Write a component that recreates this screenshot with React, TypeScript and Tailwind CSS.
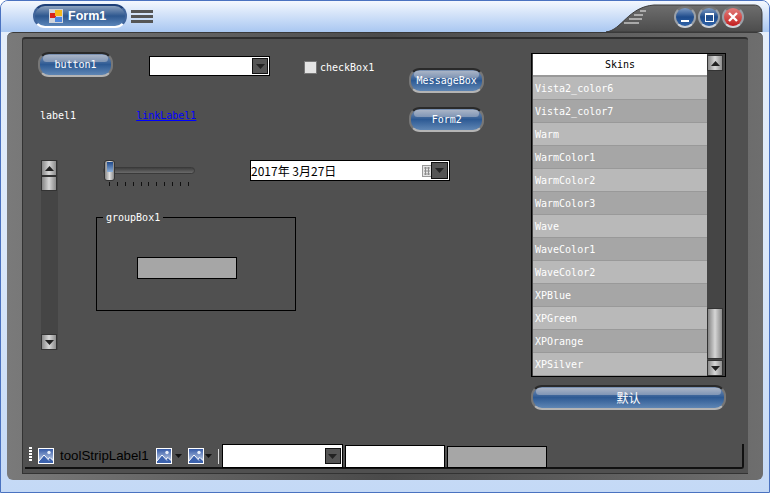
import React from 'react';

const mono = "font-['DejaVu_Sans_Mono',monospace] text-[10px] leading-none";

const SKINS = [
  'Vista2_color6', 'Vista2_color7', 'Warm', 'WarmColor1', 'WarmColor2', 'WarmColor3', 'Wave',
  'WaveColor1', 'WaveColor2', 'XPBlue', 'XPGreen', 'XPOrange', 'XPSilver',
];

const Caret = ({ up = false }: { up?: boolean }) => (
  <svg width="9" height="5" viewBox="0 0 9 5" className="block">
    <path d={up ? 'M4.5 0 9 5H0Z' : 'M0 0H9L4.5 5Z'} fill="#222" />
  </svg>
);

const Capsule = ({ label, className, textClass = mono }: { label: string; className: string; textClass?: string }) => (
  <button className={`relative h-[25px] shrink-0 rounded-[11px] border-2 border-t-[#2a2a2a] border-x-[#777] border-b-[#b4b4b4] bg-gradient-to-b from-[#7d93b3] via-[#2d5a94] to-[#5f86b4] ${className}`}>
    <span className="absolute left-[3px] right-[3px] top-[1px] h-[7px] rounded-[5px] bg-gradient-to-b from-[#a9b4c6] to-[#7f95b5]" />
    <span className={`relative block pt-[1px] text-center text-white ${textClass}`}>{label}</span>
  </button>
);

const DropButton = () => (
  <span className="flex h-[16px] w-[16px] items-center justify-center border border-[#111] bg-[#555]">
    <Caret />
  </span>
);

const Combo = ({ className }: { className: string }) => (
  <div className={`flex shrink-0 items-center justify-end border border-black bg-white pr-[1px] ${className}`}>
    <DropButton />
  </div>
);

const ScrollButton = ({ up = false }: { up?: boolean }) => (
  <div className="flex h-[16px] w-[16px] items-center justify-center border border-[#333] bg-gradient-to-r from-[#8a8a8a] via-[#d8d8d8] to-[#8d8d8d]">
    <Caret up={up} />
  </div>
);

const Thumb = ({ className }: { className: string }) => (
  <div className={`w-[16px] border border-[#333] bg-gradient-to-r from-[#858585] via-[#d6d6d6] to-[#8a8a8a] ${className}`} />
);

const PictureIcon = () => (
  <svg width="16" height="16" viewBox="0 0 16 16" className="block shrink-0">
    <defs>
      <linearGradient id="sky" x1="0" y1="0" x2="0" y2="1">
        <stop offset="0" stopColor="#2f55a4" />
        <stop offset="1" stopColor="#dfe8f6" />
      </linearGradient>
    </defs>
    <rect x="0.5" y="0.5" width="15" height="15" fill="url(#sky)" stroke="#fff" />
    <circle cx="11" cy="4.5" r="1.7" fill="#e8eef8" />
    <path d="M1 13 6 7l4 4 2-1.5L15 13v2H1Z" fill="#3c62ad" />
    <path d="M1 13 6 7l5 5.5M10 11l2-1.5 3 3" fill="none" stroke="#fff" />
  </svg>
);

const WinButton = ({ red = false, children }: { red?: boolean; children: React.ReactNode }) => (
  <div className={`relative flex h-[22px] w-[22px] items-center justify-center rounded-full border-2 border-t-[#777] border-x-[#9aa0a8] border-b-[#d0d4da] ${red ? 'bg-gradient-to-b from-[#e27a7a] to-[#c3141c]' : 'bg-gradient-to-b from-[#7f9cc4] via-[#1f4c8c] to-[#2f62a8]'}`}>
    {children}
  </div>
);

export default function App() {
  return (
    <div className="relative flex h-[493px] w-[770px] flex-col overflow-hidden rounded-t-[8px] border border-[#4a72c0] bg-gradient-to-b from-[#e6effb] via-[#dbe8fa] to-[#c4d9f6] font-['Liberation_Sans',sans-serif]">
      {/* Title bar */}
      <header className="relative flex h-[31px] shrink-0 items-start bg-gradient-to-b from-[#f4f8fe] to-[#a9c7f1] pl-[32px] pt-[3px]">
        <div className="flex h-[24px] w-[94px] items-center gap-[5px] rounded-[12px] border-2 border-x-[#40659c] border-b-white border-t-[#1d3f78] bg-gradient-to-b from-[#8da2bf] via-[#2d578f] to-[#5c86ba] pl-[14px]">
          <svg width="14" height="14" viewBox="0 0 14 14" className="shrink-0">
            <rect x="0" y="0" width="14" height="14" fill="#cfd4dc" />
            <rect x="1" y="4" width="6" height="5" fill="#d8231c" />
            <rect x="6" y="1" width="7" height="6" fill="#f4b81c" />
            <rect x="6" y="8" width="7" height="5" fill="#4f86dc" />
          </svg>
          <span className="pt-[1px] text-[12.5px] font-bold leading-none text-white">Form1</span>
        </div>
        <div className="ml-[4px] mt-[6px] flex w-[22px] flex-col gap-[2px]">
          <span className="h-[3px] bg-[#555]" />
          <span className="h-[3px] bg-[#555]" />
          <span className="h-[3px] bg-[#555]" />
        </div>
        {/* Rising right part of the frame */}
        <svg width="157" height="28" viewBox="0 0 157 28" className="absolute right-[6px] top-[3px]">
          <defs>
            <linearGradient id="frameTop" x1="0" y1="0" x2="0" y2="1">
              <stop offset="0" stopColor="#6e6e6e" />
              <stop offset="1" stopColor="#4c4c4c" />
            </linearGradient>
          </defs>
          <path d="M0 28C16 26 22 3 48 1H148C153 1 156 4 156 10V28Z" fill="url(#frameTop)" stroke="#3b3b3b" />
          <path d="M34 7h6M28 11h9M23 15h13M18 19h15" stroke="#c4c4c4" strokeWidth="1.5" />
        </svg>
        <div className="absolute right-[25px] top-[5px] flex gap-[2px]">
          <WinButton><span className="mt-[8px] h-[2px] w-[8px] bg-white" /></WinButton>
          <WinButton><span className="h-[9px] w-[9px] border border-t-2 border-white" /></WinButton>
          <WinButton red>
            <svg width="10" height="10" viewBox="0 0 10 10"><path d="M1 1 9 9M9 1 1 9" stroke="#fff" strokeWidth="2.4" /></svg>
          </WinButton>
        </div>
      </header>

      {/* Dark frame */}
      <div className="mx-[6px] flex h-[448px] flex-col rounded-[6px] border-t border-[#3a3a3a] bg-gradient-to-r from-[#7a7a7a] via-[#4a4a4a] to-[#6e6e6e] px-[15px] pb-[6px] pt-[4px]">
        {/* Form surface */}
        <main className="relative flex min-h-0 flex-1 flex-col rounded-t-[3px] border-b border-t-2 border-b-[#333] border-t-[#2e2e2e] bg-[#505050] pb-[4px] pr-[5px] shadow-[inset_1px_0_0_#333]">
          <div className="flex min-h-0 flex-1">
            {/* Left controls */}
            <div className="flex w-[509px] shrink-0 flex-col">
              <div className="flex h-[54px] items-start pt-[13px]">
                <Capsule label="button1" className="ml-[16px] w-[75px]" />
                <Combo className="ml-[36px] mt-[4px] h-[20px] w-[121px]" />
                <div className="ml-[34px] mt-[9px] flex items-center gap-[3px]">
                  <span className="h-[13px] w-[13px] border border-[#777] bg-[#e4e4e4]" />
                  <span className={`pt-[1px] text-white ${mono}`}>checkBox1</span>
                </div>
                <Capsule label="MessageBox" className="ml-[35px] mt-[16px] w-[75px]" />
              </div>

              <div className="flex h-[49px] items-start">
                <span className={`ml-[18px] mt-[18px] text-white ${mono}`}>label1</span>
                <a href="#" className={`ml-[60px] mt-[18px] text-[#0000ff] underline ${mono}`}>linkLabel1</a>
                <Capsule label="Form2" className="ml-[213px] mt-[14px] w-[75px]" />
              </div>

              <div className="mt-[18px] flex items-start">
                <div className="ml-[19px] flex h-[190px] w-[17px] flex-col bg-[#454545]">
                  <ScrollButton up />
                  <Thumb className="h-[15px]" />
                  <div className="flex-1" />
                  <ScrollButton />
                </div>
                <div className="ml-[45px] flex flex-col">
                  <div className="flex items-start">
                    <div className="relative h-[30px] w-[92px] shrink-0">
                      <div className="mt-[7px] h-[7px] rounded-[4px] border border-[#3a3a3a] bg-gradient-to-b from-[#3f3f3f] to-[#6a6a6a]" />
                      <div className="absolute left-[1px] top-0 flex h-[21px] w-[11px] justify-center rounded-[3px] border border-[#333] bg-gradient-to-r from-[#8a8a8a] via-[#e0e0e0] to-[#8a8a8a] pt-[1px]">
                        <span className="h-[10px] w-[6px] bg-gradient-to-b from-[#1f4a8c] to-[#8fb0d8]" />
                      </div>
                      <div className="absolute left-[6px] top-[22px] flex w-[80px] justify-between">
                        {Array.from({ length: 11 }).map((_, i) => (
                          <span key={i} className="h-[4px] w-px bg-[#111]" />
                        ))}
                      </div>
                    </div>
                    <div className="ml-[55px] flex h-[21px] w-[200px] items-center border border-black bg-white pr-[1px]">
                      <span className="flex-1 font-['Noto_Sans_CJK_SC',sans-serif] text-[12px] leading-none text-black">2017年 3月27日</span>
                      <svg width="10" height="12" viewBox="0 0 10 12" className="mr-[-1px]">
                        <rect x="0.5" y="0.5" width="9" height="11" fill="#e6e6e6" stroke="#999" />
                        <path d="M2 3h6M2 6h6M2 9h6M3.5 2v8M6.5 2v8" stroke="#8c8c8c" />
                      </svg>
                      <span className="flex h-[17px] w-[17px] items-center justify-center border border-[#111] bg-[#555]"><Caret /></span>
                    </div>
                  </div>
                  <fieldset className="relative ml-[-7px] mt-[27px] h-[94px] w-[200px] border border-black pl-[40px]">
                    <legend className={`absolute left-[6px] top-[-5px] bg-[#505050] px-[3px] text-white ${mono}`}>groupBox1</legend>
                    <div className="mt-[39px] h-[22px] w-[100px] border border-black bg-[#a6a6a6]" />
                  </fieldset>
                </div>
              </div>
            </div>

            {/* Skins list */}
            <div className="flex w-[195px] shrink-0 flex-col pt-[14px]">
              <div className="flex h-[324px] border border-black bg-[#454545] px-px">
                <div className="flex w-[175px] flex-col">
                  <div className={`flex h-[23px] items-center justify-center border-b-2 border-[#999] bg-white pt-[1px] text-black ${mono}`}>Skins</div>
                  {SKINS.map((name, i) => (
                    <div
                      key={name}
                      className={`flex h-[23px] shrink-0 items-center border-b border-[#999] pl-[2px] pt-[2px] text-white ${mono} ${i % 2 ? 'bg-[#a6a6a6]' : 'bg-[#b9b9b9]'}`}
                    >
                      {name}
                    </div>
                  ))}
                </div>
                <div className="flex w-[17px] flex-col pt-px">
                  <ScrollButton up />
                  <div className="flex-1" />
                  <Thumb className="h-[51px]" />
                  <div className="h-[1px]" />
                  <ScrollButton />
                </div>
              </div>
              <Capsule
                label="默认"
                className="mt-[8px] w-[195px]"
                textClass="font-['Noto_Sans_CJK_SC',sans-serif] text-[12px] leading-none"
              />
            </div>
          </div>

          {/* Tool strip */}
          <div className="ml-[3px] mr-[-1px] flex h-[25px] shrink-0 items-start rounded-br-[3px] border-b-2 border-r-2 border-[#111] pl-[4px]">
            <span className="mt-[3px] flex flex-col gap-[1px]">
              {[0, 1, 2, 3, 4].map((i) => (
                <span key={i} className="h-[2px] w-[3px] bg-white" />
              ))}
            </span>
            <span className="ml-[6px] mt-[4px]"><PictureIcon /></span>
            <span className="ml-[6px] mt-[4px] text-[13.3px] leading-[16px] text-black">toolStripLabel1</span>
            <span className="ml-[7px] mt-[4px]"><PictureIcon /></span>
            <span className="ml-[3px] mt-[10px]"><svg width="7" height="4" viewBox="0 0 7 4" className="block"><path d="M0 0H7L3.5 4Z" fill="#111" /></svg></span>
            <span className="ml-[6px] mt-[4px]"><PictureIcon /></span>
            <span className="ml-[1px] mt-[10px]"><svg width="7" height="4" viewBox="0 0 7 4" className="block"><path d="M0 0H7L3.5 4Z" fill="#111" /></svg></span>
            <span className="ml-[6px] mt-[5px] h-[15px] w-[1px] bg-[#d8d8d8]" />
            <Combo className="ml-[3px] h-[24px] w-[121px]" />
            <div className="ml-[2px] mt-[1px] h-[23px] w-[100px] border border-black bg-white" />
            <div className="ml-[2px] mt-[2px] h-[22px] w-[100px] border border-black bg-[#a6a6a6]" />
          </div>
        </main>
      </div>
    </div>
  );
}
